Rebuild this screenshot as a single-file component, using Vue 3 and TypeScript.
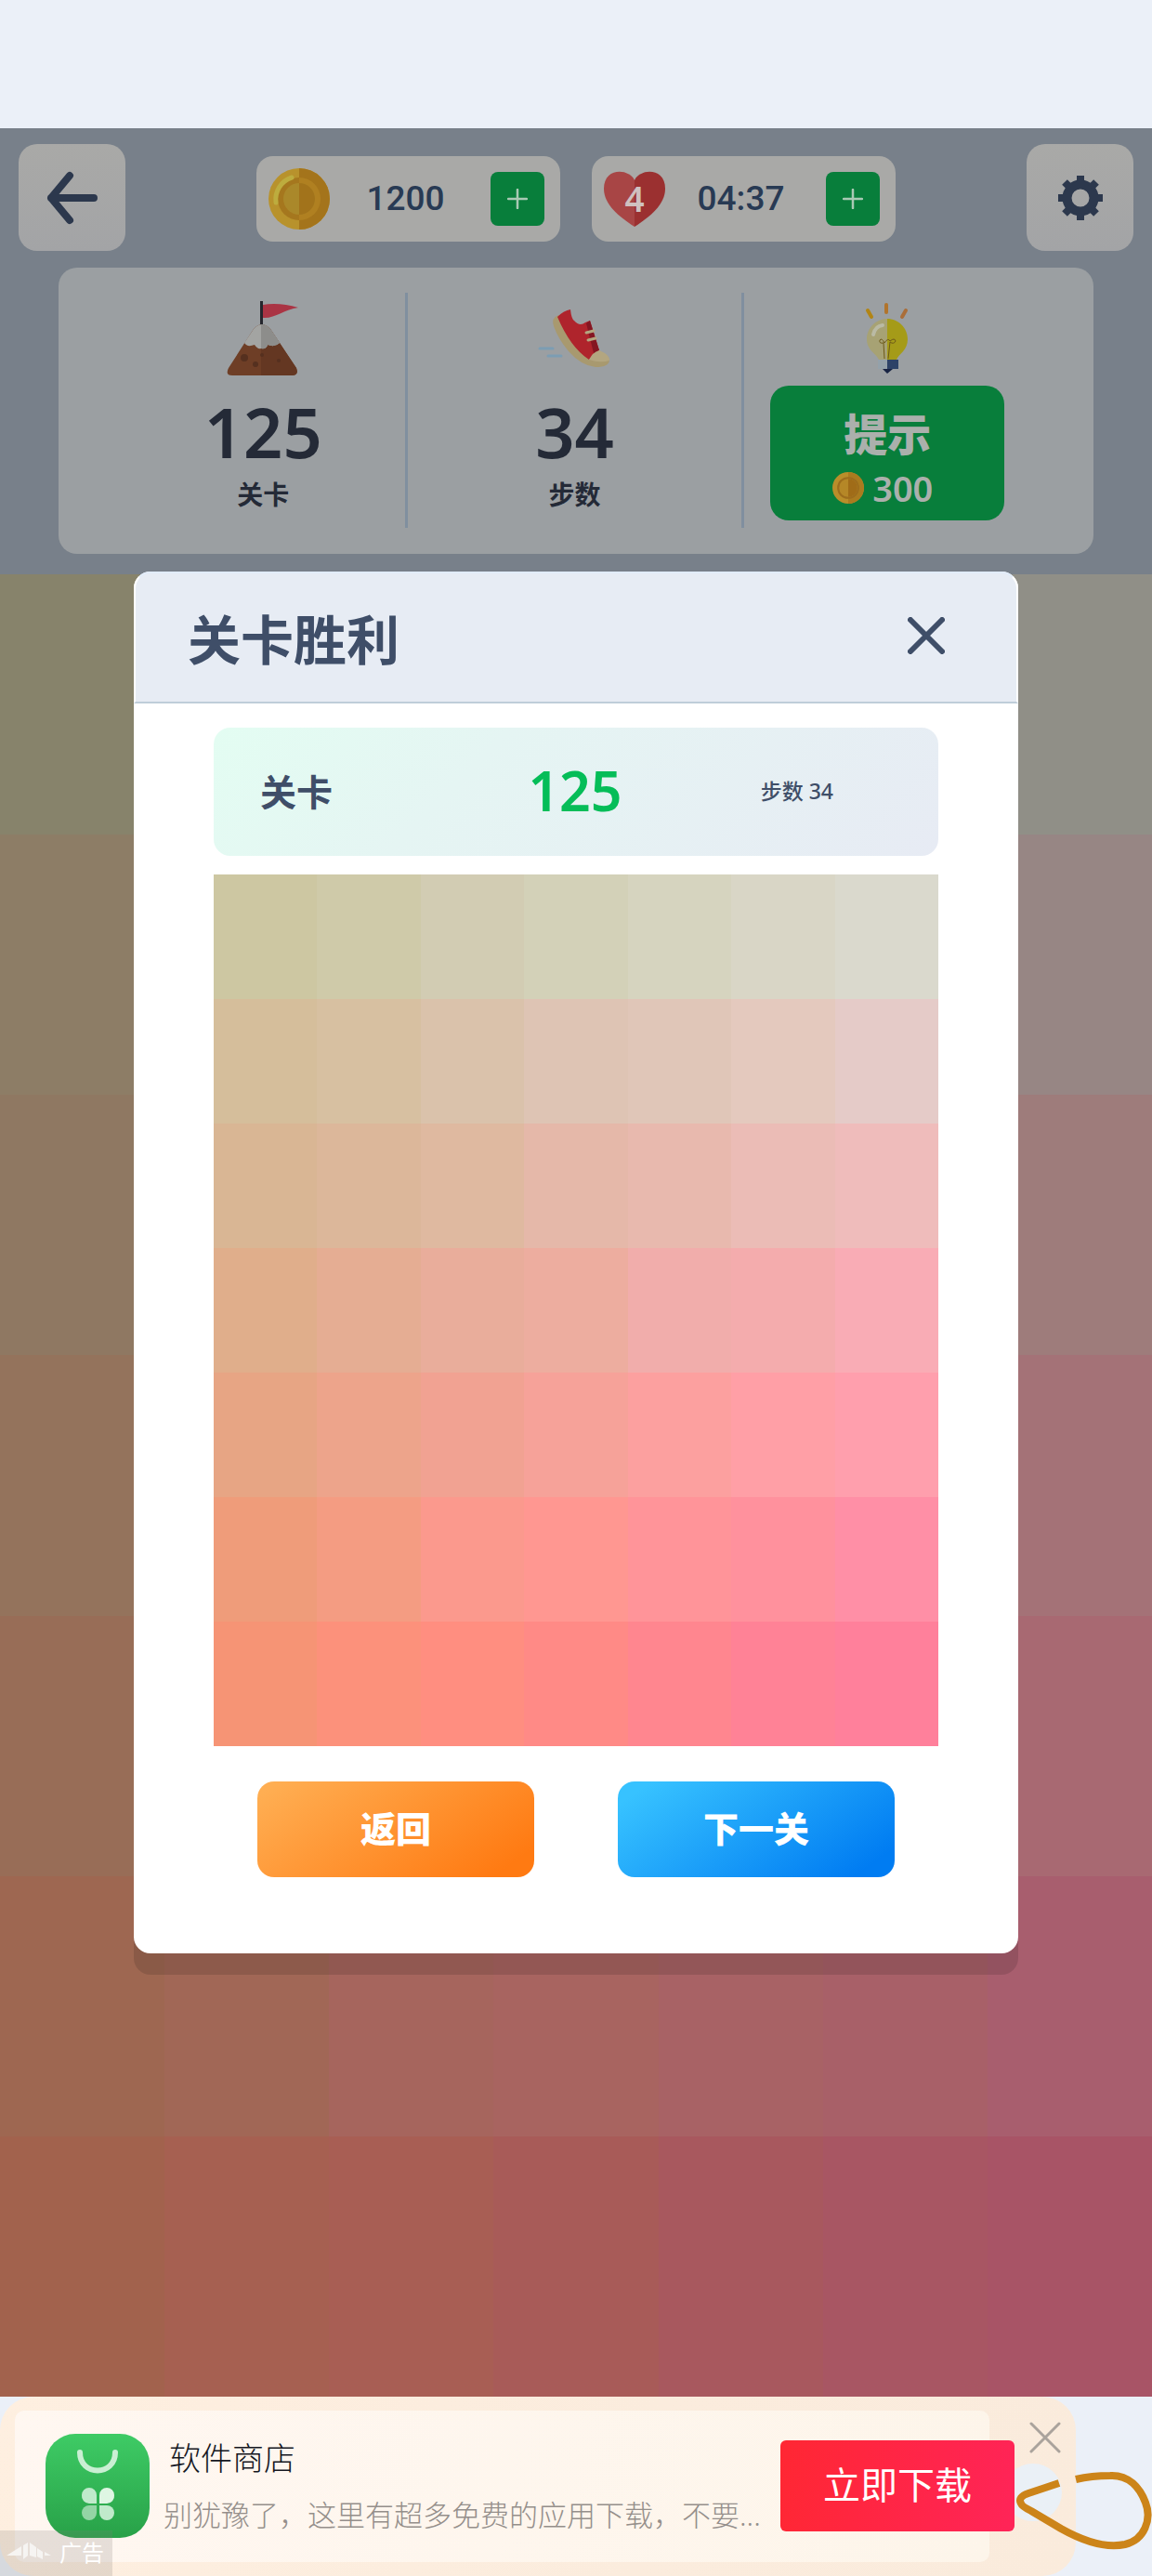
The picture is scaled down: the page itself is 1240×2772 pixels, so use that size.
<script setup lang="ts">
const level = 125
const steps = 34
const coins = 1200
const lives = 4
const timer = '04:37'
const hintCost = 300

const palette: string[] = [
  '#cdc7a2', '#cfcaa9', '#d2ccb3', '#d3d1b8', '#d6d4bf', '#d9d6c6', '#dad9cd',
  '#d5be9b', '#d7c0a1', '#dac2ab', '#dec4b4', '#e0c6b8', '#e4c9be', '#e5cbc8',
  '#d9b694', '#dcb79a', '#dfb9a0', '#e5b8a9', '#e8b9ae', '#ebbcb6', '#efbcbb',
  '#e0ae8b', '#e5ad93', '#e9ad9b', '#edad9f', '#f1adab', '#f4acad', '#f9acb5',
  '#e7a584', '#eda48b', '#f1a292', '#f6a299', '#fca09f', '#ff9fa6', '#ff9fad',
  '#ef9c7a', '#f49c82', '#fb998d', '#ff9791', '#ff9499', '#ff919d', '#ff8fa6',
  '#f69475', '#fc917b', '#ff8e80', '#ff8a86', '#ff868f', '#ff8296', '#ff809b',
]
</script>

<template>
  <div class="page">
    <div class="status"></div>

    <main class="game">
      <header class="hud">
        <nav class="topbar">
          <button class="square" type="button" aria-label="返回上一页">
            <svg width="56" height="58" viewBox="0 0 56 58" fill="none" stroke="#2c384d" stroke-width="8" stroke-linecap="round" stroke-linejoin="round">
              <path d="M25 5 L5 29 L25 53 M5 29 H51" />
            </svg>
          </button>

          <div class="pills">
            <div class="pill">
              <svg class="badge" width="66" height="66" viewBox="0 0 66 66">
                <circle cx="33" cy="33" r="33" fill="#b8922c" />
                <path d="M33 0 A33 33 0 0 1 33 66Z" fill="#a4741b" />
                <circle cx="33" cy="33" r="23" fill="#a5771e" />
                <path d="M33 10 A23 23 0 0 1 33 56Z" fill="#b08021" />
                <circle cx="33" cy="33" r="17" fill="#aa882a" />
                <path d="M33 16 A17 17 0 0 1 33 50Z" fill="#a2731b" />
                <path d="M8 37 A25 25 0 0 1 25 10" fill="none" stroke="#bdac3e" stroke-width="5" stroke-linecap="round" />
              </svg>
              <span class="amount">{{ coins }}</span>
              <button class="plus" type="button" aria-label="增加金币">
                <svg width="22" height="22" viewBox="0 0 22 22" stroke="#a9c9b4" stroke-width="2.5" stroke-linecap="round"><path d="M11 1V21M1 11H21" /></svg>
              </button>
            </div>
            <div class="pill">
              <div class="badge heart">
                <svg width="66" height="60" viewBox="0 0 66 60">
                  <path d="M33 10 C27 -3 0 -4 0 19 C0 36 16 49 33 60Z" fill="#a84545" />
                  <path d="M33 10 C39 -3 66 -4 66 19 C66 36 50 49 33 60Z" fill="#9b3030" />
                </svg>
                <span>{{ lives }}</span>
              </div>
              <span class="amount">{{ timer }}</span>
              <button class="plus" type="button" aria-label="增加生命">
                <svg width="22" height="22" viewBox="0 0 22 22" stroke="#a9c9b4" stroke-width="2.5" stroke-linecap="round"><path d="M11 1V21M1 11H21" /></svg>
              </button>
            </div>
          </div>

          <button class="square" type="button" aria-label="设置">
            <svg width="50" height="50" viewBox="-25 -25 50 50" fill="none" stroke="#2c384d">
              <circle r="14.5" stroke-width="10" />
              <g stroke-width="8" stroke-linejoin="round">
                <path d="M0 -15V-24M0 15V24M-15 0H-24M15 0H24M-11 -11L-17 -17M11 -11L17 -17M-11 11L-17 17M11 11L17 17" />
              </g>
            </svg>
          </button>
        </nav>

        <section class="stats">
          <div class="stat">
            <svg width="78" height="81" viewBox="0 0 78 81">
              <path d="M39 4 C50 2 64 3 77 7 C62 9 52 19 39 18Z" fill="#aa3444" />
              <rect x="36" y="0" width="3" height="28" fill="#25262d" />
              <path d="M37 25 Q31 26 27 33 L2 72 Q-2 80 6 80 H70 Q78 80 75 72 L49 33 Q44 25 37 25Z" fill="#6e3e26" />
              <path d="M37 25 Q44 25 49 33 L75 72 Q78 80 70 80 H37Z" fill="#643722" />
              <path d="M37 25 Q31 26 27 33 L19 45 Q22 50 30 47 Q33 52 37 51 Q43 52 44 47 Q52 50 57 45 L49 33 Q44 25 37 25Z" fill="#a3a4a2" />
              <path d="M37 25 Q44 25 49 33 L57 45 Q52 50 44 47 Q43 52 37 51Z" fill="#8d8d8b" />
              <g fill="#55301f"><circle cx="19" cy="61" r="4" /><circle cx="31" cy="68" r="3" /><circle cx="38" cy="58" r="2" /><circle cx="56" cy="64" r="2" /></g>
            </svg>
            <strong>{{ level }}</strong>
            <span>关卡</span>
          </div>
          <div class="stat">
            <svg width="80" height="81" viewBox="0 -6 80 81">
              <path d="M23 9 Q15 12 18 21 Q23 35 34 48 Q47 63 63 65 Q78 65 78 57Z" fill="#a8996f" />
              <path d="M22 11 Q29 4 36 3 Q37 13 40 15 Q46 22 52 17 L57 15 L67 47 L56 57 Q36 44 22 11Z" fill="#af242c" />
              <path d="M53 18 L57 15 L67 47 L61 50Z" fill="#841622" />
              <path d="M56 57 Q60 49 67 47 Q79 52 78 58 Q68 61 56 57Z" fill="#b3a680" />
              <path d="M53 28 L61 26 M55 36 L63 34" stroke="#b3a680" stroke-width="3" stroke-linecap="round" />
              <path d="M3 45 H17 M12 53 H26" stroke="#7c9db3" stroke-width="3" stroke-linecap="round" />
            </svg>
            <strong>{{ steps }}</strong>
            <span>步数</span>
          </div>
          <div class="stat">
            <svg width="50" height="80" viewBox="0 0 50 80">
              <g stroke-width="4" stroke-linecap="round"><path d="M4 10 L8 17" stroke="#b28515" /><path d="M24 4 V12" stroke="#b1742c" /><path d="M45 10 L41 17" stroke="#aa6e39" /></g>
              <path d="M25 19 C13 19 3 29 3 41 C3 53 13 56 16 63 H25Z" fill="#a7a274" />
              <path d="M25 19 C37 19 47 29 47 41 C47 53 38 56 35 63 H25Z" fill="#a59b18" />
              <path d="M10 36 Q12 27 20 26" fill="none" stroke="#babaa4" stroke-width="4" stroke-linecap="round" />
              <path d="M22 62 L21 45 Q16 46 17 42 Q19 39 22 45 Q26 39 28 43 Q33 39 34 43 Q32 47 28 44 L26 62" fill="none" stroke="#6d5918" stroke-width="1" />
              <path d="M15 63 H25 V73 H15Z" fill="#94a1aa" />
              <path d="M25 63 H37 V73 H25Z" fill="#2d4267" />
              <path d="M20 73 H31 L25 78Z" fill="#172343" />
            </svg>
            <button class="hint" type="button">
              <b>提示</b>
              <span class="cost">
                <svg width="34" height="34" viewBox="0 0 66 66">
                  <circle cx="33" cy="33" r="33" fill="#b98e2a" />
                  <path d="M33 0 A33 33 0 0 1 33 66Z" fill="#aa7b1f" />
                  <circle cx="33" cy="33" r="23" fill="#9d6d1d" />
                  <circle cx="33" cy="33" r="19" fill="#b58727" />
                  <path d="M33 14 A19 19 0 0 1 33 52Z" fill="#a06c18" />
                </svg>
                {{ hintCost }}
              </span>
            </button>
          </div>
        </section>
      </header>

      <div class="board">
        <i v-for="(color, i) in palette" :key="i" :style="{ background: color }"></i>
      </div>

      <section class="modal" role="dialog" aria-labelledby="win-title">
        <header class="modal-head">
          <h1 id="win-title">关卡胜利</h1>
          <button class="close" type="button" aria-label="关闭">
            <svg width="40" height="40" viewBox="0 0 40 40" stroke="#3f4e68" stroke-width="6" stroke-linecap="round"><path d="M3 3L37 37M37 3L3 37" /></svg>
          </button>
        </header>
        <div class="modal-body">
          <div class="result">
            <b>关卡</b>
            <strong>{{ level }}</strong>
            <span>步数 {{ steps }}</span>
          </div>
          <div class="preview">
            <i v-for="(color, i) in palette" :key="i" :style="{ background: color }"></i>
          </div>
          <div class="actions">
            <button class="back" type="button">返回</button>
            <button class="next" type="button">下一关</button>
          </div>
        </div>
      </section>
    </main>

    <footer class="ad">
      <div class="ad-card">
        <svg class="rope" width="210" height="193" viewBox="0 4 210 193" fill="none">
          <circle cx="82" cy="107" r="31" fill="#eaf0f6" />
          <path d="M110 97 L77 108 Q65 112 69 119 Q70 122 80 127 L112 146 Q153 169 181 163 C202 158 210 136 203 118 C197 102 185 88 165 89 Q145 89 128 93" stroke="#cc8419" stroke-width="8" />
        </svg>
        <div class="ad-inner">
          <svg class="store" width="112" height="112" viewBox="0 0 112 112">
            <defs>
              <linearGradient id="store-fill" x1="0" y1="0" x2="0" y2="1">
                <stop offset="0" stop-color="#3ecb65" /><stop offset="1" stop-color="#28a148" />
              </linearGradient>
            </defs>
            <rect width="112" height="112" rx="32" fill="url(#store-fill)" />
            <path d="M37 20 C37 46 75 46 75 20" fill="none" stroke="#c9efd3" stroke-width="6" stroke-linecap="round" />
            <path d="M55 75 H47 A8 8 0 0 1 39 66 A8 8 0 0 1 47 58 A8 8 0 0 1 55 66Z" fill="#c0eacb" />
            <path d="M58 75 H66 A8 8 0 0 0 74 66 A8 8 0 0 0 66 58 A8 8 0 0 0 58 66Z" fill="#def6e3" />
            <path d="M55 77 H47 A8 8 0 0 0 39 85 A8 8 0 0 0 47 93 A8 8 0 0 0 55 85Z" fill="#94d5a5" />
            <path d="M58 77 H66 A8 8 0 0 1 74 85 A8 8 0 0 1 66 93 A8 8 0 0 1 58 85Z" fill="#c0eacb" />
          </svg>
          <div class="ad-text">
            <h2>软件商店</h2>
            <p>别犹豫了，这里有超多免费的应用下载，不要...</p>
          </div>
          <button class="download" type="button">立即下载</button>
        </div>
        <button class="ad-close" type="button" aria-label="关闭广告">
          <svg width="34" height="34" viewBox="0 0 34 34" stroke="#aaa39c" stroke-width="3" stroke-linecap="round"><path d="M2 2L32 32M32 2L2 32" /></svg>
        </button>
      </div>
      <div class="ad-tag">
        <svg width="48" height="20" viewBox="0 0 48 20" fill="#f6f4f2">
          <path d="M0 14 L16 4 V14Z M18 3 L23 0 V14 L18 18Z M25 0 L32 5 V16 L25 14Z M33 6 L39 10 V18 L33 15Z M41 10 L48 14 H41Z" />
        </svg>
        广告
      </div>
    </footer>
  </div>
</template>

<style>
body {
  margin: 0;
}
</style>

<style scoped>
.page {
  display: flex;
  flex-direction: column;
  min-height: 100vh;
  background: #ebf0f8;
  font-family: "Noto Sans", "Noto Sans CJK SC", sans-serif;
}

button {
  display: flex;
  align-items: center;
  justify-content: center;
  margin: 0;
  padding: 0;
  border: 0;
  font: inherit;
  cursor: pointer;
}

svg {
  display: block;
  flex: none;
}

.status {
  height: 138px;
}

.game {
  position: relative;
  flex: 1;
  display: flex;
  flex-direction: column;
}

.hud {
  padding-bottom: 22px;
  background: #78808a;
}

.topbar {
  display: flex;
  justify-content: space-between;
  align-items: center;
  padding: 17px 20px 18px;
}

.square {
  width: 115px;
  height: 115px;
  border-radius: 20px;
  background: linear-gradient(#a9a9a7, #a3a4a6);
}

.pills {
  display: flex;
  gap: 34px;
  padding-top: 2px;
}

.pill {
  display: flex;
  align-items: center;
  box-sizing: border-box;
  width: 327px;
  height: 92px;
  padding: 0 17px 0 13px;
  border-radius: 18px;
  background: #a9a9a7;
}

.amount {
  flex: 1;
  padding-right: 10px;
  text-align: center;
  font-family: Roboto, sans-serif;
  font-size: 37px;
  font-weight: 500;
  color: #283a54;
}

.heart {
  position: relative;
}

.heart span {
  position: absolute;
  inset: 0;
  text-align: center;
  line-height: 60px;
  font-size: 37px;
  font-weight: 600;
  color: #cfc1c0;
}

.plus {
  width: 58px;
  height: 58px;
  border-radius: 8px;
  background: #087e3b;
}

.stats {
  display: grid;
  grid-template-columns: 6fr 7fr 6fr;
  box-sizing: border-box;
  height: 308px;
  margin: 0 63px;
  padding: 27px 67px 28px;
  border-radius: 20px;
  background: #9b9fa2;
}

.stat {
  display: flex;
  flex-direction: column;
  align-items: center;
  padding-top: 9px;
  color: #242a37;
}

.stat:nth-child(-n + 2) {
  border-right: 3px solid #808f9f;
}

.stat strong {
  margin-top: 20px;
  line-height: 80px;
  font-size: 74px;
  font-weight: 600;
}

.stat > span {
  margin-top: 9px;
  line-height: 36px;
  font-size: 28px;
  font-weight: 700;
}

.hint {
  flex-direction: column;
  box-sizing: border-box;
  width: 252px;
  height: 145px;
  margin-top: 11px;
  padding-top: 14px;
  border-radius: 20px;
  background: #087e3b;
  color: #abb0ac;
}

.hint b {
  line-height: 60px;
  font-size: 47px;
  font-weight: 900;
}

.cost {
  display: flex;
  align-items: center;
  gap: 9px;
  margin-right: 10px;
  line-height: 56px;
  font-size: 38px;
  font-weight: 600;
}

.board,
.preview {
  display: grid;
  grid-template-columns: repeat(7, 1fr);
}

.board {
  flex: 1;
  grid-auto-rows: 1fr;
  filter: brightness(0.66);
}

.modal {
  position: absolute;
  top: 477px;
  left: 144px;
  right: 144px;
  border-radius: 18px;
  background: #fff;
  box-shadow: 0 23px 0 rgba(0, 0, 0, 0.12);
}

.modal-head {
  display: flex;
  align-items: center;
  justify-content: space-between;
  box-sizing: border-box;
  height: 142px;
  padding: 0 77px 0 56px;
  border: 2px solid #fff;
  border-top-color: #e2ecf9;
  border-bottom-color: #bfcdd9;
  border-radius: 18px 18px 0 0;
  background: #e7ecf4;
}

.modal-head h1 {
  margin: 4px 0 0;
  line-height: 80px;
  font-size: 57px;
  font-weight: 700;
  color: #3f4e68;
}

.close {
  width: 40px;
  height: 40px;
  margin-bottom: 4px;
  background: none;
}

.modal-body {
  padding: 26px 86px 82px;
}

.result {
  display: grid;
  grid-template-columns: 1fr 1fr 1fr;
  align-items: center;
  box-sizing: border-box;
  height: 138px;
  margin-bottom: 20px;
  padding: 0 52px 4px 50px;
  border-radius: 18px;
  background: linear-gradient(135deg, #e3fdf2, #e5f5f3 35%, #e7ebf4);
  color: #3f4e68;
}

.result b {
  font-size: 39px;
  font-weight: 700;
}

.result strong {
  text-align: center;
  font-size: 59px;
  font-weight: 600;
  color: #05bd58;
}

.result span {
  padding-right: 61px;
  text-align: right;
  font-size: 23px;
  font-weight: 500;
}

.preview {
  grid-auto-rows: 134px;
}

.actions {
  display: flex;
  justify-content: space-between;
  margin-top: 38px;
  padding: 0 47px;
}

.actions button {
  box-sizing: border-box;
  width: 298px;
  height: 103px;
  padding-bottom: 6px;
  border-radius: 18px;
  font-size: 38px;
  font-weight: 900;
  color: #fff;
}

.back {
  background: linear-gradient(145deg, #ffae52 5%, #ff7a12 90%);
}

.next {
  background: linear-gradient(145deg, #37c2ff 8%, #007cf2 90%);
}

.ad {
  position: relative;
  background: #ebf0f8;
}

.ad-card {
  margin-right: 82px;
  padding: 15px 93px 15px 16px;
  border-radius: 36px;
  background: linear-gradient(100deg, #feefe0, #fbecdd 60%, #faebdc);
}

.ad-inner {
  position: relative;
  display: flex;
  align-items: center;
  box-sizing: border-box;
  height: 163px;
  padding: 0 0 2px 33px;
  border-radius: 10px;
  background: linear-gradient(100deg, #fff7f1, #fdf5ea);
}

.ad-text {
  flex: 1;
  margin-left: 15px;
}

.ad-text h2 {
  margin: 0 0 16px 6px;
  line-height: 46px;
  font-size: 34px;
  font-weight: 300;
  color: #15171f;
}

.ad-text p {
  margin: 0;
  line-height: 44px;
  font-size: 31px;
  font-weight: 300;
  white-space: nowrap;
  color: #958f8b;
}

.download {
  box-sizing: border-box;
  width: 252px;
  height: 98px;
  margin-right: -27px;
  padding-bottom: 6px;
  border-radius: 6px;
  background: linear-gradient(100deg, #ff2733, #ff2458);
  font-size: 40px;
  color: #fff;
}

.ad-close {
  position: absolute;
  top: 27px;
  right: 98px;
  width: 34px;
  height: 34px;
  background: none;
}

.rope {
  position: absolute;
  right: 0;
  bottom: 0;
}

.ad-tag {
  position: absolute;
  left: 0;
  bottom: 0;
  display: flex;
  align-items: center;
  gap: 9px;
  box-sizing: border-box;
  width: 121px;
  height: 49px;
  padding: 0 0 4px 7px;
  background: rgba(130, 125, 122, 0.2);
  font-size: 24px;
  color: #fff;
}
</style>
